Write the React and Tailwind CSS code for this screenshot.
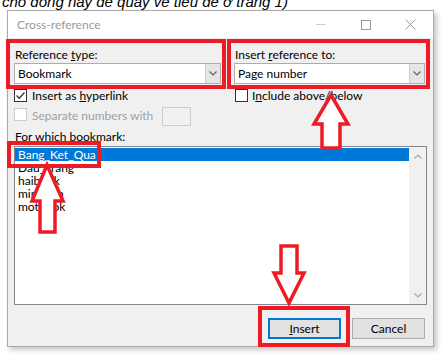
const RED = 'border-[#ed1c24]'

function Chevron({ up = false, color = '#606060' }) {
  return (
    <svg width="8" height="5" viewBox="0 0 8 5" className="block">
      <polyline
        points={up ? '0.5,4.5 4,1 7.5,4.5' : '0.5,0.5 4,4 7.5,0.5'}
        fill="none"
        stroke={color}
        strokeWidth="1.2"
      />
    </svg>
  )
}

function Combo({ value, width }) {
  return (
    <div className={`${width} h-[21px] bg-white border border-[#adadad] flex`}>
      <div className="flex-1 pl-[3px] leading-[19px]">{value}</div>
      <div className="w-[15px] bg-[#e5e5e5] border-l border-[#cfcfcf] flex items-center justify-center">
        <Chevron />
      </div>
    </div>
  )
}

function Checkbox({ checked = false, disabled = false }) {
  return (
    <div
      className={`w-[13px] h-[13px] shrink-0 bg-white border ${
        disabled ? 'border-[#cccccc]' : 'border-[#333333]'
      }`}
    >
      {checked && (
        <svg width="11" height="11" viewBox="0 0 11 11" className="block">
          <polyline points="1.5,5.5 4.2,8.2 9.5,2.5" fill="none" stroke="#333" strokeWidth="1.3" />
        </svg>
      )}
    </div>
  )
}

const bookmarks = ['Bang_Ket_Qua', 'Dau_Trang', 'haibook', 'minhhoa', 'motbook']

export default function App() {
  return (
    <div className="w-[444px] h-[359px] bg-white relative overflow-hidden font-['Lato',sans-serif] text-[12px] text-black">
      <div className="-mt-[7px] pl-[2px] leading-[17px] text-[15px] italic font-['Liberation_Sans',sans-serif] whitespace-nowrap">
        cho dòng này để quay về tiêu đề ở trang 1)
      </div>

      <div className="ml-[7px] w-[427px] h-[337px] border border-[#aaaaaa] bg-[#f0f0f0] shadow-[3px_3px_5px_rgba(0,0,0,0.22)] flex flex-col">
        {/* title bar */}
        <div className="h-[27px] bg-white flex items-center pl-[9px]">
          <span className="text-[#999999]">Cross-reference</span>
          <div className="ml-auto flex h-full">
            <div className="w-[45px] flex items-center justify-center">
              <div className="w-[10px] h-px bg-[#cccccc]" />
            </div>
            <div className="w-[45px] flex items-center justify-center">
              <div className="w-[10px] h-[10px] border border-[#999999]" />
            </div>
            <div className="w-[45px] flex items-center justify-center">
              <svg width="11" height="11" viewBox="0 0 11 11" className="block">
                <path d="M0.5 0.5 L10.5 10.5 M10.5 0.5 L0.5 10.5" stroke="#999" strokeWidth="1" />
              </svg>
            </div>
          </div>
        </div>

        {/* body */}
        <div className="flex-1 px-[6px] flex flex-col">
          <div className="mt-[10px] h-[14px] leading-[14px] flex">
            <div className="w-[207px] pl-[1px]">
              Reference <span className="underline underline-offset-[1px]">t</span>ype:
            </div>
            <div className="ml-[13px] pl-[1px]">
              Insert <span className="underline underline-offset-[1px]">r</span>eference to:
            </div>
          </div>

          <div className="mt-[1px] flex">
            <Combo value="Bookmark" width="w-[207px]" />
            <div className="ml-[13px]">
              <Combo value="Page number" width="w-[191px]" />
            </div>
          </div>

          <div className="mt-[5px] h-[13px] flex leading-[13px]">
            <div className="w-[207px] flex">
              <Checkbox checked />
              <span className="ml-[5px]">
                Insert as <span className="underline underline-offset-[1px]">h</span>yperlink
              </span>
            </div>
            <div className="ml-[14px] flex">
              <Checkbox />
              <span className="ml-[4px]">
                I<span className="underline underline-offset-[1px]">n</span>clude above/below
              </span>
            </div>
          </div>

          <div className="mt-[5px] h-[19px] flex items-start">
            <div className="mt-[1px]">
              <Checkbox disabled />
            </div>
            <span className="ml-[5px] mt-[2px] w-[130px] leading-[14px] text-[#a0a0a0]">
              Separate numbers with
            </span>
            <div className="w-[29px] h-[19px] border border-[#cccccc] bg-[#f0f0f0]" />
          </div>

          <div className="mt-[4px] h-[14px] leading-[14px] pl-[1px]">
            For <span className="underline underline-offset-[1px]">w</span>hich bookmark:
          </div>

          <div className="mt-[2px] h-[159px] border border-[#828790] bg-white flex">
            <div className="flex-1 pt-[1px]">
              {bookmarks.map((name, i) => (
                <div
                  key={name}
                  className={`h-[13px] leading-[13px] pl-[3px] ${
                    i === 0 ? 'bg-[#0078d7] text-white' : ''
                  }`}
                >
                  {name}
                </div>
              ))}
            </div>
            <div className="w-[17px] bg-[#f0f0f0] flex flex-col justify-between">
              <div className="h-[17px] pt-[1px] flex items-center justify-center">
                <Chevron up color="#a6a6a6" />
              </div>
              <div className="h-[17px] flex items-center justify-center">
                <Chevron color="#a6a6a6" />
              </div>
            </div>
          </div>

          <div className="mt-[13px] mr-[2px] flex justify-end gap-[11px]">
            <button className="w-[73px] h-[21px] bg-[#e1e1e1] border-2 border-[#0078d7] leading-[17px]">
              <span className="underline underline-offset-[1px]">I</span>nsert
            </button>
            <button className="w-[73px] h-[21px] bg-[#e1e1e1] border border-[#adadad] leading-[19px]">
              Cancel
            </button>
          </div>
        </div>
      </div>

      {/* annotations */}
      <div className={`absolute left-[6px] top-[39px] w-[220px] h-[50px] border-4 ${RED}`} />
      <div className={`absolute left-[227px] top-[39px] w-[203px] h-[50px] border-4 ${RED}`} />
      <div className={`absolute left-[7px] top-[141px] w-[94px] h-[27px] border-4 ${RED}`} />
      <div className={`absolute left-[258px] top-[306px] w-[92px] h-[41px] border-4 ${RED}`} />

      <svg width="444" height="359" className="absolute left-0 top-0 pointer-events-none">
        <g fill="white" stroke="#ed1c24" strokeWidth="3.5" strokeLinejoin="miter">
          <polygon points="331,95 348,124 340,124 340,148 322,148 322,124 314,124" />
          <polygon points="47,165 63,201 55,201 55,232 40,232 40,201 32,201" />
          <polygon points="281,246 297,246 297,273 304,273 289,303 274,273 281,273" />
        </g>
      </svg>
    </div>
  )
}
